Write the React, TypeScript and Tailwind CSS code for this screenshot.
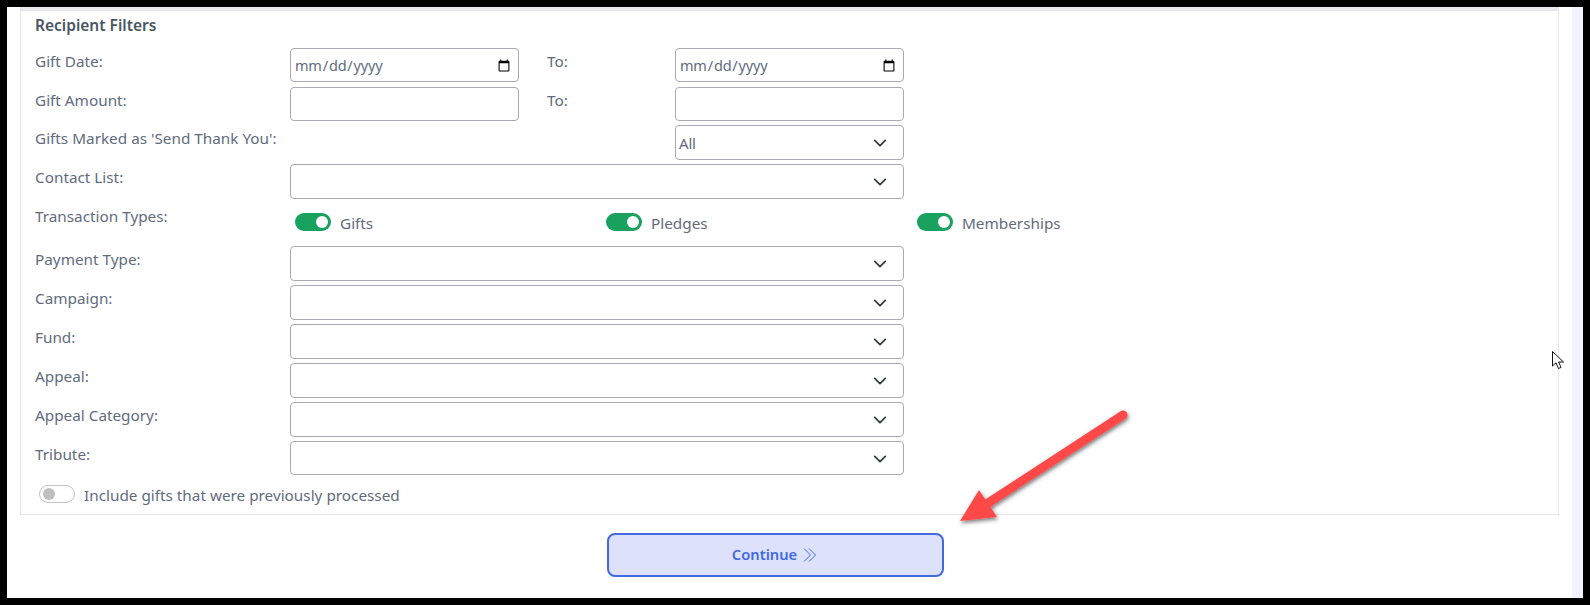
const labelCls = 'text-[15.3px] leading-[21px] text-[#626b7d]';
const fieldCls =
  'w-full rounded-[4px] border border-[#a9a9b2] bg-white pl-[3px] pr-[5px] text-[14.5px] tracking-[-0.2px] text-[#626b7d] outline-none appearance-none';

function Chevron() {
  return (
    <svg
      viewBox="0 0 16 16"
      className="pointer-events-none absolute right-[17px] top-[11px] h-[14px] w-[14px]"
      fill="none"
      stroke="#343a40"
      strokeWidth="2"
      strokeLinecap="round"
      strokeLinejoin="round"
    >
      <path d="m2 5 6 6 6-6" />
    </svg>
  );
}

function SelectBox({ value }: { value?: string }) {
  return (
    <div className="relative">
      <select className={`${fieldCls} h-[34.67px] pt-[1px] text-[15px]`} defaultValue={value ?? ''}>
        <option value={value ?? ''}>{value ?? ''}</option>
      </select>
      <Chevron />
    </div>
  );
}

function Toggle({ on, label }: { on: boolean; label: string }) {
  return (
    <div className="flex items-center">
      {on ? (
        <span className="flex h-[18px] w-[36px] items-center justify-end rounded-full bg-[#18a15f] pr-[3px]">
          <span className="h-[12px] w-[12px] rounded-full bg-white" />
        </span>
      ) : (
        <span className="flex h-[18px] w-[36px] items-center rounded-full border border-[#c4c4c4] bg-white pl-[3px]">
          <span className="h-[12px] w-[12px] rounded-full bg-[#bfbfbf]" />
        </span>
      )}
      <span className={`${labelCls} ml-[9px] pt-[2px]`}>{label}</span>
    </div>
  );
}

function Row({ label, children }: { label: string; children: React.ReactNode }) {
  return (
    <div className="grid h-[38.9px] grid-cols-[255px_614px]">
      <div className={`${labelCls} pt-[3px]`}>{label}</div>
      <div>{children}</div>
    </div>
  );
}

const dateCls = `${fieldCls} h-[34px] pt-[2px] [&::-webkit-calendar-picker-indicator]:mr-0`;
const selectRows = ['Payment Type:', 'Campaign:', 'Fund:', 'Appeal:', 'Appeal Category:', 'Tribute:'];

export default function App() {
  return (
    <div className="relative h-[605px] w-[1590px] bg-black p-[7px] font-['Noto_Sans',sans-serif]">
      <div className="flex h-[591px] bg-white">
        <div className="flex-1 pl-[13px] pr-[13px]">
          <div className="h-[508px] border-x border-b border-t-4 border-x-[#e6e6ea] border-b-[#e6e6ea] border-t-[#e8e8ee] pl-[14px]">
            <h3 className="pt-[4px] text-[15.5px] font-semibold leading-[21px] text-[#4b5563]">Recipient Filters</h3>
            <div className="mt-[12px] grid h-[38.67px] grid-cols-[255px_229px_28px_128px_229px]">
              <div className={`${labelCls} pt-[3px]`}>Gift Date:</div>
              <input type="date" className={dateCls} />
              <div />
              <div className={`${labelCls} pt-[3px]`}>To:</div>
              <input type="date" className={dateCls} />
            </div>
            <div className="grid h-[38.67px] grid-cols-[255px_229px_28px_128px_229px]">
              <div className={`${labelCls} pt-[3px]`}>Gift Amount:</div>
              <input type="text" className={`${fieldCls} h-[34px]`} />
              <div />
              <div className={`${labelCls} pt-[3px]`}>To:</div>
              <input type="text" className={`${fieldCls} h-[34px]`} />
            </div>
            <div className="grid h-[38.67px] grid-cols-[255px_229px_28px_128px_229px]">
              <div className={`${labelCls} pt-[3px]`}>Gifts Marked as 'Send Thank You':</div>
              <div />
              <div />
              <div />
              <SelectBox value="All" />
            </div>
            <Row label="Contact List:">
              <SelectBox />
            </Row>
            <div className="grid h-[43.5px] grid-cols-[260px_311px_311px_auto]">
              <div className={`${labelCls} pt-[3px]`}>Transaction Types:</div>
              <div className="pt-[8px]">
                <Toggle on label="Gifts" />
              </div>
              <div className="pt-[8px]">
                <Toggle on label="Pledges" />
              </div>
              <div className="pt-[8px]">
                <Toggle on label="Memberships" />
              </div>
            </div>
            {selectRows.map((label) => (
              <Row key={label} label={label}>
                <SelectBox />
              </Row>
            ))}
            <div className="pl-[4px] pt-[3px]">
              <Toggle on={false} label="Include gifts that were previously processed" />
            </div>
          </div>
          <div className="mt-[18px] flex justify-center">
            <button className="ml-[-29px] flex h-[44px] w-[337px] items-center justify-center gap-[5px] rounded-[8px] border-2 border-[#4169e1] bg-[#dde1fb] pb-[2px] text-[14.7px] font-semibold text-[#4169e1]">
              Continue
              <svg viewBox="0 0 16 16" className="mt-[2px] h-[16px] w-[16px]" fill="none" stroke="#4169e1" strokeWidth="1">
                <path d="M2 1.5l6.5 6.5-6.5 6.5M7 1.5l6.5 6.5-6.5 6.5" />
              </svg>
            </button>
          </div>
        </div>
        <div className="w-[11px] bg-[#f3f3ff]" />
      </div>

      {/* annotation arrow */}
      <svg className="pointer-events-none absolute left-0 top-0" width="1590" height="605" fill="none">
        <defs>
          <filter id="arrowShadow" x="-20%" y="-20%" width="140%" height="140%">
            <feDropShadow dx="1" dy="2" stdDeviation="2" floodColor="#000" floodOpacity="0.55" />
          </filter>
        </defs>
        <g filter="url(#arrowShadow)">
          <path d="M1123 415L985 505" stroke="#ff4848" strokeWidth="9" strokeLinecap="round" />
          <path d="M960 521L979 490L997 517Z" fill="#ff4848" />
        </g>
      </svg>

      {/* mouse cursor */}
      <svg className="pointer-events-none absolute left-[1551px] top-[350px]" width="14" height="21" viewBox="0 0 14 21">
        <path d="M1.5 1.5V16L5 12.8L7.5 18.5L10 17.4L7.6 12H12.5Z" fill="#fff" stroke="#111" strokeWidth="1" />
      </svg>
    </div>
  );
}
